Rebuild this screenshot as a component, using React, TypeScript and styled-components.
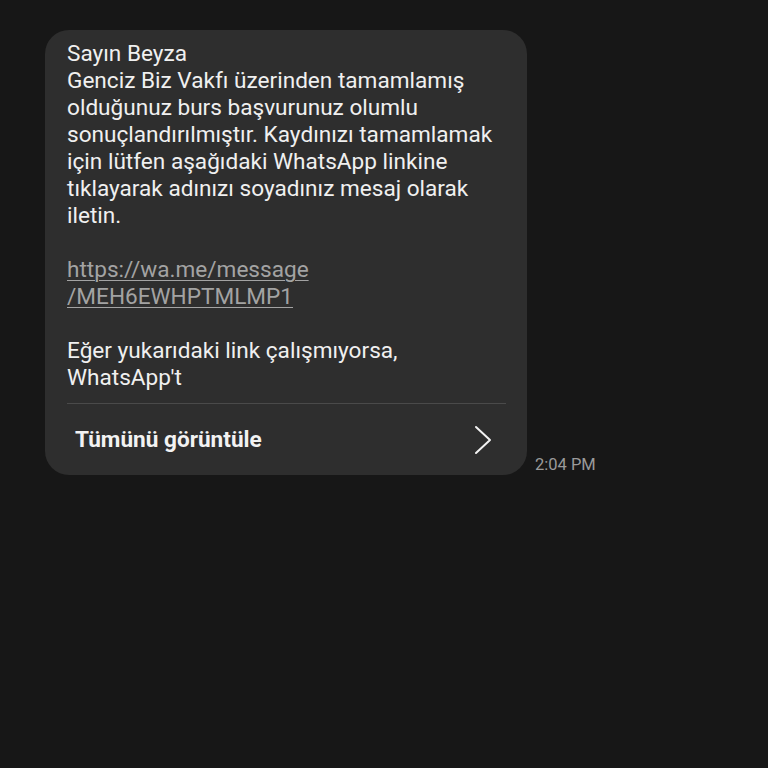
import styled, { createGlobalStyle } from "styled-components";

const GlobalStyle = createGlobalStyle`
  html, body {
    margin: 0;
    padding: 0;
    background: #171717;
  }
  body {
    font-family: Roboto, "Noto Sans", sans-serif;
  }
`;

export default function App() {
  return (
    <>
      <GlobalStyle />
      <Screen>
        <MessageRow>
          <Bubble>
            <Body>
              Sayın Beyza
              <br />
              Genciz Biz Vakfı üzerinden tamamlamış
              <br />
              olduğunuz burs başvurunuz olumlu
              <br />
              sonuçlandırılmıştır. Kaydınızı tamamlamak
              <br />
              için lütfen aşağıdaki WhatsApp linkine
              <br />
              tıklayarak adınızı soyadınız mesaj olarak
              <br />
              iletin.
              <br />
              <br />
              <Link>
                https://wa.me/message
                <br />
                /MEH6EWHPTMLMP1
              </Link>
              <br />
              <br />
              Eğer yukarıdaki link çalışmıyorsa,
              <br />
              WhatsApp't
            </Body>
            <Divider />
            <ViewAll>
              <ViewAllLabel>Tümünü görüntüle</ViewAllLabel>
              <svg width="20" height="30" viewBox="0 0 20 30" fill="none">
                <path
                  d="M3 2 L17 15 L3 28"
                  stroke="#f2f2f2"
                  strokeWidth="2"
                  strokeLinecap="round"
                  strokeLinejoin="round"
                />
              </svg>
            </ViewAll>
          </Bubble>
          <Time>2:04 PM</Time>
        </MessageRow>
      </Screen>
    </>
  );
}

const Screen = styled.div`
  width: 768px;
  height: 768px;
  background: #171717;
  padding: 30px 0 0 45px;
  box-sizing: border-box;
`;

const MessageRow = styled.div`
  display: flex;
  align-items: flex-end;
  gap: 8px;
`;

const Bubble = styled.div`
  width: 482px;
  box-sizing: border-box;
  background: #2e2e2e;
  border-radius: 24px;
  padding: 10px 21px 0 22px;
`;

const Body = styled.p`
  margin: 0;
  font-size: 22.6px;
  line-height: 27px;
  color: #f0f0f0;
`;

const Link = styled.span`
  color: #a3a3a3;
  text-decoration: underline;
  text-underline-offset: 3px;
  text-decoration-thickness: 1px;
`;

const Divider = styled.div`
  height: 1px;
  background: #4a4a4a;
  margin-top: 12px;
`;

const ViewAll = styled.div`
  display: flex;
  align-items: center;
  justify-content: space-between;
  height: 71px;
  padding: 0 13px 0 8px;
`;

const ViewAllLabel = styled.span`
  font-size: 22.6px;
  font-weight: 700;
  color: #f2f2f2;
`;

const Time = styled.span`
  font-size: 16.5px;
  color: #9a9a9a;
  margin-bottom: 1px;
`;
